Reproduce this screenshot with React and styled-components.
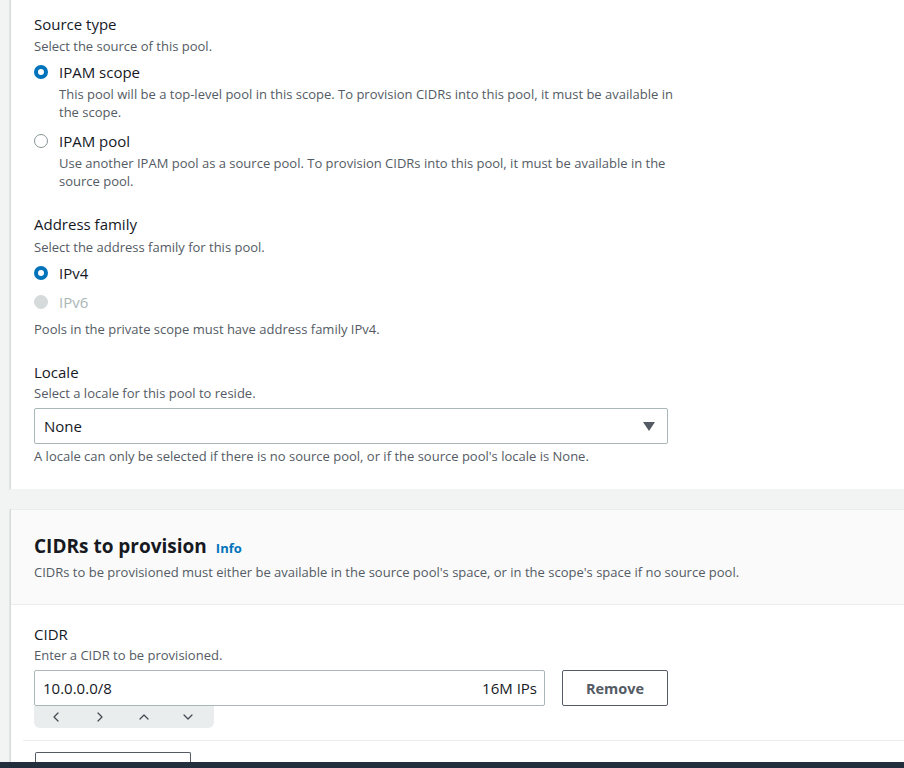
import React from "react"
import styled, { createGlobalStyle } from "styled-components"
import { ChevronLeft, ChevronRight, ChevronUp, ChevronDown } from "lucide-react"

const GlobalStyle = createGlobalStyle`
  body {
    margin: 0;
    background-color: #f2f3f3;
    font-family: "Open Sans", "Noto Sans", Arial, sans-serif;
    color: #16191f;
  }
`

const Page = styled.div`
  padding-left: 10px;
  padding-bottom: 20px;
  overflow: hidden;
`

const Panel = styled.div`
  background: #ffffff;
  margin-top: ${p => p.top || 0}px;
  margin-right: -4px;
  border-left: 1px solid #d5dbdb;
  box-shadow: 0 1px 1px 0 rgba(0, 28, 36, 0.3), 1px 1px 1px 0 rgba(0, 28, 36, 0.15);
`

const PanelBody = styled.div`
  padding: ${p => p.pad || "15px 24px 24px 23px"};
  display: flex;
  flex-direction: column;
  gap: ${p => p.gap || 23}px;
`

const PanelHeader = styled.div`
  background: #fafafa;
  border-top: 1px solid #eaeded;
  border-bottom: 1px solid #eaeded;
  padding: 23px 23px 23px;
`

const Title = styled.h2`
  margin: 0;
  font-size: 19px;
  line-height: 26px;
  font-weight: 700;
  display: flex;
  align-items: baseline;
  gap: 9px;
`

const InfoLink = styled.a`
  font-size: 13px;
  font-weight: 700;
  color: #0073bb;
  text-decoration: none;
`

const Field = styled.div`
  display: flex;
  flex-direction: column;
`

const Label = styled.div`
  font-size: 15px;
  line-height: 22px;
`

const Description = styled.div`
  font-size: 13px;
  line-height: 18px;
  color: #545b64;
  margin-top: ${p => p.mt || 0}px;
`

const RadioGroup = styled.div`
  display: flex;
  flex-direction: column;
  gap: ${p => p.gap || 8}px;
  margin-top: 6px;
`

const RadioRow = styled.div`
  display: grid;
  grid-template-columns: 14px 1fr;
  column-gap: 11px;
  align-items: center;
  max-width: 650px;
`

const RadioDot = styled.span`
  width: 14px;
  height: 14px;
  box-sizing: border-box;
  border-radius: 50%;
  background: ${p => (p.disabled ? "#d5dbdb" : "#fff")};
  border: ${p =>
    p.checked ? "4px solid #0073bb" : p.disabled ? "1px solid #d5dbdb" : "1px solid #879596"};
`

const RadioLabel = styled.span`
  font-size: 15px;
  line-height: 22px;
  color: ${p => (p.disabled ? "#aab7b8" : "#16191f")};
`

const RadioDesc = styled(Description)`
  grid-column: 2;
  margin-top: 2px;
`

const Helper = styled(Description)`
  margin-top: ${p => p.mt ?? 7}px;
`

const Select = styled.div`
  margin-top: 6px;
  width: 634px;
  height: 36px;
  box-sizing: border-box;
  border: 1px solid #aab7b8;
  border-radius: 2px;
  display: flex;
  align-items: center;
  justify-content: space-between;
  padding: 0 12px 0 9px;
  font-size: 15px;
`

const Caret = styled.span`
  width: 0;
  height: 0;
  border-left: 6px solid transparent;
  border-right: 6px solid transparent;
  border-top: 9px solid #545b64;
`

const Gap = styled.div`
  height: ${p => p.h}px;
  background: #f2f3f3;
`

const CidrRow = styled.div`
  display: flex;
  gap: 17px;
  margin-top: 6px;
  align-items: flex-start;
`

const InputWrap = styled.div`
  display: flex;
  flex-direction: column;
`

const Input = styled.div`
  width: 511px;
  height: 36px;
  box-sizing: border-box;
  border: 1px solid #aab7b8;
  border-radius: 2px;
  display: flex;
  align-items: center;
  justify-content: space-between;
  padding: 0 7px 0 8px;
  font-size: 15px;
`

const Toolbar = styled.div`
  width: 180px;
  height: 22px;
  background: #eaeded;
  border-radius: 0 0 6px 6px;
  display: flex;
  color: #414750;
`

const ToolSlot = styled.span`
  width: 44px;
  display: flex;
  align-items: center;
  justify-content: center;
`

const Button = styled.button`
  width: 106px;
  height: 36px;
  border: 1px solid #545b64;
  border-radius: 2px;
  background: #fff;
  color: #545b64;
  font-family: inherit;
  font-size: 14.5px;
  font-weight: 700;
`

const Divider = styled.div`
  height: 1px;
  background: #eaeded;
  margin: 12px 0 11px 12px;
`

const AddButton = styled.div`
  width: 154px;
  height: 20px;
  margin-left: 24px;
  border: 1px solid #545b64;
  border-bottom: none;
  border-radius: 2px 2px 0 0;
`

const Footer = styled.div`
  position: fixed;
  left: 0;
  right: 0;
  bottom: 0;
  height: 6px;
  background: #232f3e;
`

const Radio = ({ label, desc, checked, disabled }) => (
  <RadioRow>
    <RadioDot checked={checked} disabled={disabled} />
    <RadioLabel disabled={disabled}>{label}</RadioLabel>
    {desc && <RadioDesc>{desc}</RadioDesc>}
  </RadioRow>
)

const App = () => {
  return (
    <>
      <GlobalStyle />
      <Page>
        <Panel top={-2}>
          <PanelBody>
            <Field>
              <Label>Source type</Label>
              <Description mt={2}>Select the source of this pool.</Description>
              <RadioGroup gap={9}>
                <Radio
                  checked
                  label="IPAM scope"
                  desc="This pool will be a top-level pool in this scope. To provision CIDRs into this pool, it must be available in the scope."
                />
                <Radio
                  label="IPAM pool"
                  desc="Use another IPAM pool as a source pool. To provision CIDRs into this pool, it must be available in the source pool."
                />
              </RadioGroup>
            </Field>

            <Field>
              <Label>Address family</Label>
              <Description mt={3}>Select the address family for this pool.</Description>
              <RadioGroup gap={7}>
                <Radio checked label="IPv4" />
                <Radio disabled label="IPv6" />
              </RadioGroup>
              <Helper>Pools in the private scope must have address family IPv4.</Helper>
            </Field>

            <Field>
              <Label>Locale</Label>
              <Description mt={1}>Select a locale for this pool to reside.</Description>
              <Select>
                None
                <Caret />
              </Select>
              <Helper mt={3}>
                A locale can only be selected if there is no source pool, or if the source pool's locale is None.
              </Helper>
            </Field>
          </PanelBody>
        </Panel>

        <Gap h={20} />

        <Panel>
          <PanelHeader>
            <Title>
              CIDRs to provision <InfoLink href="#">Info</InfoLink>
            </Title>
            <Description mt={2}>
              CIDRs to be provisioned must either be available in the source pool's space, or in the scope's space if no source pool.
            </Description>
          </PanelHeader>
          <PanelBody pad="18px 24px 0 23px">
            <Field>
              <Label>CIDR</Label>
              <Description mt={1}>Enter a CIDR to be provisioned.</Description>
              <CidrRow>
                <InputWrap>
                  <Input>
                    <span>10.0.0.0/8</span>
                    <span>16M IPs</span>
                  </Input>
                  <Toolbar>
                    <ToolSlot><ChevronLeft size={16} strokeWidth={1.8} /></ToolSlot>
                    <ToolSlot><ChevronRight size={16} strokeWidth={1.8} /></ToolSlot>
                    <ToolSlot><ChevronUp size={16} strokeWidth={1.8} /></ToolSlot>
                    <ToolSlot><ChevronDown size={16} strokeWidth={1.8} /></ToolSlot>
                  </Toolbar>
                </InputWrap>
                <Button>Remove</Button>
              </CidrRow>
            </Field>
          </PanelBody>
          <Divider />
          <AddButton />
        </Panel>
      </Page>
      <Footer />
    </>
  )
}

export default App
